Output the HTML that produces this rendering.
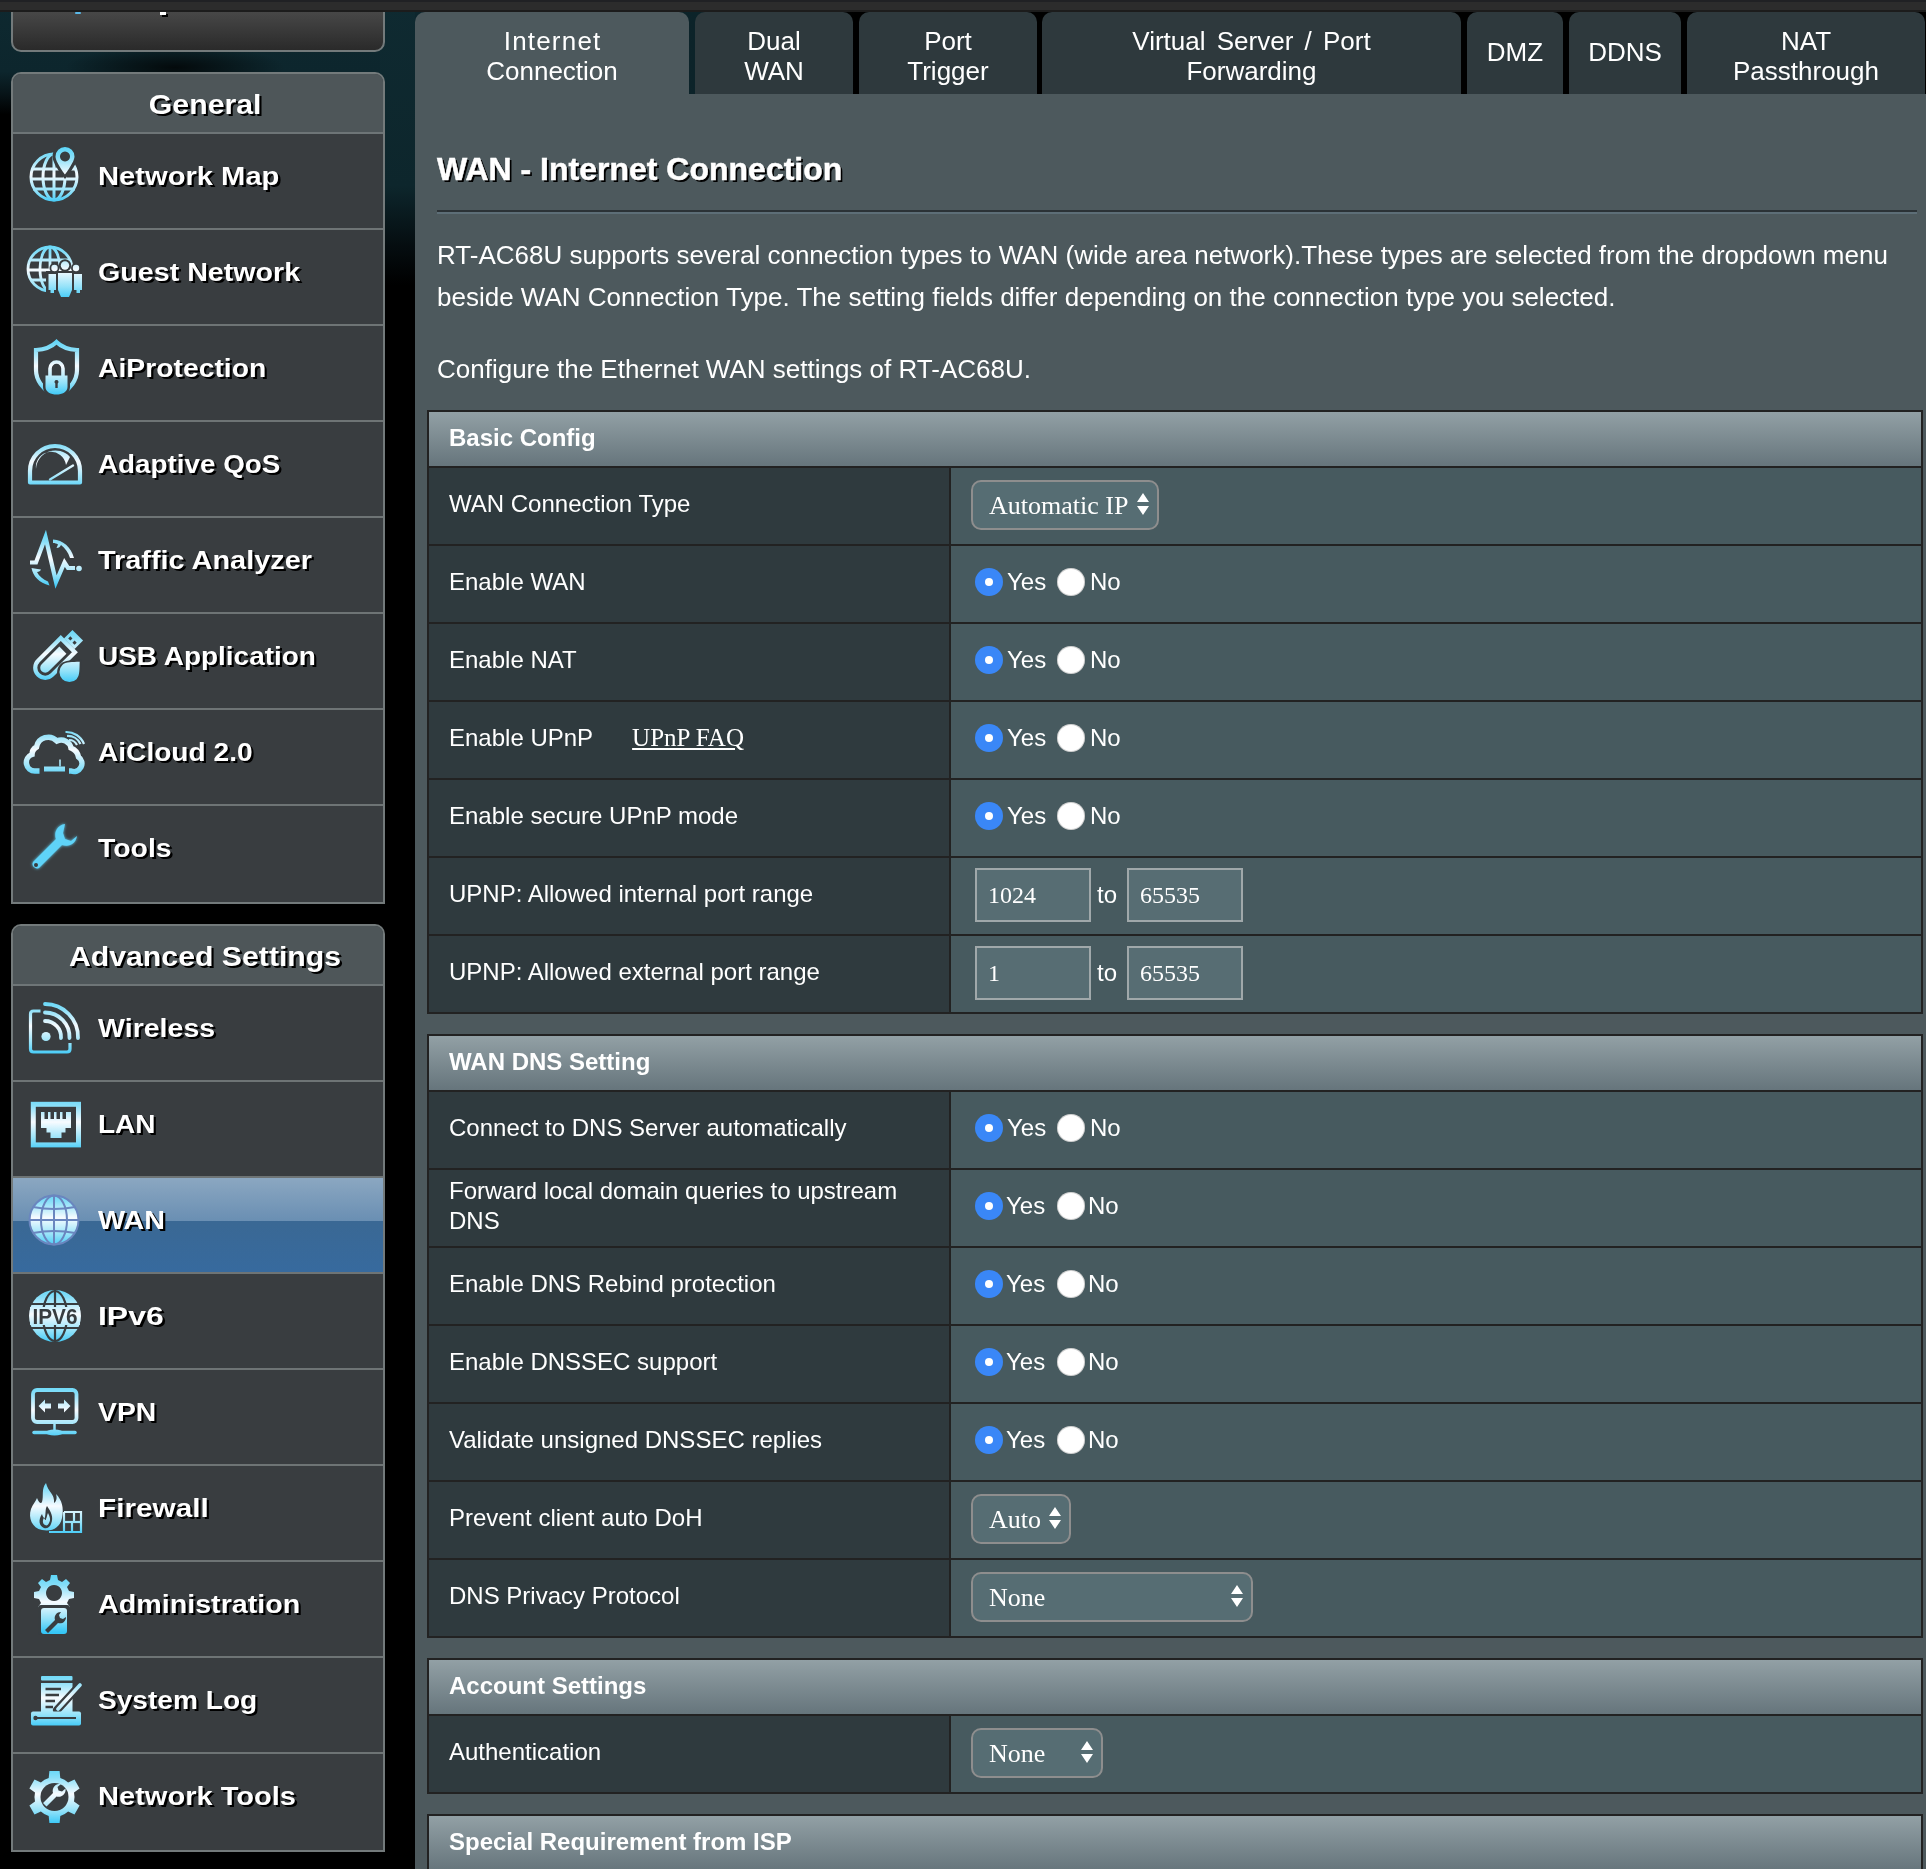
<!DOCTYPE html>
<html><head><meta charset="utf-8">
<style>
*{box-sizing:border-box}
html,body{margin:0;padding:0}
body{width:1926px;height:1869px;overflow:hidden;position:relative;font-family:"Liberation Sans",sans-serif;color:#fff;
background:#000;}
.bgA{position:absolute;left:0;top:0;width:415px;height:130px;background:linear-gradient(#0e2930 0%,#0d262d 55%,#071418 72%,#000 88%)}
.bgB{position:absolute;left:380px;top:0;width:35px;height:300px;background:linear-gradient(#0f2a31 0%,#0d262c 62%,#050d10 82%,#000 95%)}
.bgD{position:absolute;left:415px;top:0;width:440px;height:94px;background:linear-gradient(90deg,#0d262d 0%,#0c2329 65%,#000 100%)}
.bgC{position:absolute;left:60px;top:40px;width:230px;height:50px;background:radial-gradient(ellipse 110px 22px at 50% 55%,rgba(0,0,0,0.75),rgba(0,0,0,0))}
.topbar{position:absolute;z-index:5;left:0;top:0;width:1926px;height:12px;background:#2c2c2c;border-top:2px solid #202124;border-bottom:2px solid #1c1c1c}
.abs{position:absolute}
/* sidebar */
.topbox{position:absolute;left:11px;top:-40px;width:374px;height:92px;border:2px solid #737a7b;border-radius:0 0 10px 10px;
background:linear-gradient(#474747 57%,#2a2a2a 100%)}
.menu{position:absolute;left:11px;width:374px;border:2px solid #737a7b;border-radius:10px 10px 0 0;background:#393d40;overflow:hidden}
.menu .hd{height:60px;background:#4e5659;border-bottom:2px solid #6e7577;text-align:center;font-weight:bold;font-size:28px;line-height:62px;
text-shadow:2px 2px 0 #000;padding-left:14px}
.menu .hd .sx{display:inline-block}
.menu .it{position:relative;height:96px;border-bottom:2px solid #6e7475;background:#393d40}
.menu .it:last-child{border-bottom:none;height:96px}
.menu .it .tx{position:absolute;left:85px;top:27px;height:30px;line-height:30px;font-weight:bold;font-size:25px;text-shadow:2px 2px 0 #000;white-space:nowrap;transform-origin:0 0}
.menu .it svg.ic{position:absolute;left:11px;top:10px;width:60px;height:60px;overflow:visible}
.menu .it.act{background:linear-gradient(#8ba7c1 0%,#6a8fb3 45.5%,#3a6894 46%,#376a9e 100%)}
/* main */
.main{position:absolute;left:415px;top:94px;width:1511px;height:1775px;background:#4d595d}
.tab{position:absolute;top:12px;height:82px;background:#2e393d;border-radius:10px 10px 0 0;text-align:center;font-size:26px;line-height:30px;
padding-top:14px;white-space:nowrap}
.tab.act{background:#4d595d}
.tab.one{padding-top:25px}
.title{position:absolute;left:437px;top:151px;font-size:32px;font-weight:bold;text-shadow:2px 2px 0 #000;white-space:nowrap;-webkit-text-stroke:0.5px #fff}
.hr{position:absolute;left:437px;top:210px;width:1480px;height:4px;border-top:2px solid #2b3236;border-bottom:2px solid #5d6e77}
.desc{position:absolute;left:437px;font-size:26px;line-height:42px;white-space:nowrap}
/* tables */
.ft{position:absolute;left:427px;width:1496px;border:2px solid #222}
.ft .hd{height:56px;border-bottom:2px solid #222;background:linear-gradient(#92a0a5,#66757c);font-weight:bold;font-size:24px;line-height:54px;padding-left:20px}
.ft .hd span{position:relative;top:-1px}
.ft .r{display:flex;height:78px;border-bottom:2px solid #222}
.ft .r:last-child{border-bottom:none;height:76px}
.ft .th{width:522px;background:#2f3a3e;border-right:2px solid #222;font-size:24px;line-height:30px;padding-left:20px;display:flex;align-items:center;height:76px}
.ft .th span{position:relative;top:-2px}
.ft .td{flex:1;background:#475a5f;height:76px;position:relative}
.radio{position:absolute;top:22px;width:28px;height:28px;border-radius:50%}
.radio.on{background:#3a87f7}
.radio.on::after{content:"";position:absolute;left:10px;top:10px;width:8px;height:8px;border-radius:50%;background:#fff}
.radio.off{background:#fff;box-shadow:inset 0 0 0 1px rgba(0,0,0,0.18)}
.rl{position:absolute;top:21px;font-size:24px;line-height:30px}
.sel{position:absolute;top:12px;left:20px;height:50px;border:2px solid #8e8e8e;border-radius:10px;background:#566d73;font-family:"Liberation Serif",serif;font-size:26px;line-height:48px;padding-left:16px}
.sel .ar{position:absolute;right:8px;top:10px;width:12px;height:24px}
.inp{position:absolute;top:10px;height:54px;width:116px;border:2px solid #a0a8aa;background:#576d73;font-family:"Liberation Serif",serif;font-size:24px;line-height:50px;padding-left:11px}
.to{position:absolute;top:22px;font-size:24px;line-height:30px}
.faq{position:relative;top:-1px;margin-left:39px;font-family:"Liberation Serif",serif;font-size:25px;text-decoration:underline}
</style></head><body style="will-change:transform">
<div class="bgA"></div><div class="bgB"></div><div class="bgC"></div><div class="bgD"></div>
<div class="topbar"></div>

<!-- SIDEBAR -->
<svg width="0" height="0" style="position:absolute">
 <defs>
  <linearGradient id="ig" x1="0" y1="0" x2="0" y2="60" gradientUnits="userSpaceOnUse">
   <stop offset="0" stop-color="#4fd3f8"/><stop offset="0.22" stop-color="#86def8"/><stop offset="0.5" stop-color="#f7fbff"/><stop offset="0.78" stop-color="#94e2f9"/><stop offset="1" stop-color="#36c7f7"/>
  </linearGradient>
  <linearGradient id="ig2" x1="0" y1="0" x2="0" y2="60" gradientUnits="userSpaceOnUse">
   <stop offset="0" stop-color="#7fdcf8"/><stop offset="0.55" stop-color="#ffffff"/><stop offset="1" stop-color="#44c6f4"/>
  </linearGradient>
   <filter id="glow" x="-30%" y="-30%" width="160%" height="160%"><feGaussianBlur in="SourceGraphic" stdDeviation="1.6" result="b"/><feMerge><feMergeNode in="b"/><feMergeNode in="SourceGraphic"/></feMerge></filter>
  <linearGradient id="igr1" x1="25.5" y1="-25.5" x2="-17" y2="17" gradientUnits="userSpaceOnUse"><stop offset="0" stop-color="#4fd3f8"/><stop offset="0.22" stop-color="#86def8"/><stop offset="0.5" stop-color="#f7fbff"/><stop offset="0.78" stop-color="#94e2f9"/><stop offset="1" stop-color="#36c7f7"/></linearGradient>
  <linearGradient id="igr2" x1="-33.2" y1="-33.2" x2="9.2" y2="9.2" gradientUnits="userSpaceOnUse"><stop offset="0" stop-color="#4fd3f8"/><stop offset="0.22" stop-color="#86def8"/><stop offset="0.5" stop-color="#f7fbff"/><stop offset="0.78" stop-color="#94e2f9"/><stop offset="1" stop-color="#36c7f7"/></linearGradient>
 </defs>
</svg>
<div class="topbox"><div style="position:absolute;left:147px;top:50px;width:6px;height:3px;background:#fff;box-shadow:2px 2px 0 #000"></div><div style="position:absolute;left:62px;top:50px;width:6px;height:2px;border-radius:2px;background:#5ab8e8"></div></div>

<div class="menu" style="top:72px;height:832px">
 <div class="hd"><span class="sx" style="transform:scaleX(1.08)">General</span></div>
 <div class="it"><svg class="ic" viewBox="0 0 60 60"><g fill="none" stroke="url(#ig)" stroke-width="3">
<circle cx="30" cy="33" r="23"/>
<ellipse cx="30" cy="33" rx="11" ry="23"/>
<line x1="30" y1="10" x2="30" y2="56"/>
<line x1="8" y1="25" x2="52" y2="25"/><line x1="7" y1="35" x2="53" y2="35"/><line x1="9" y1="45" x2="51" y2="45"/>
</g>
<path d="M41 2.5a10 10 0 0 1 10 10c0 6-10 18.5-10 18.5s-10-12.5-10-18.5a10 10 0 0 1 10-10z" fill="#383d40" stroke="#383d40" stroke-width="5"/>
<path d="M41 3a9.5 9.5 0 0 1 9.5 9.5c0 5.5-9.5 18-9.5 18s-9.5-12.5-9.5-18A9.5 9.5 0 0 1 41 3z M41 7.5a5 5 0 1 0 0.01 0z" fill="url(#ig)" fill-rule="evenodd"/></svg><div class="tx" style="transform:scaleX(1.166)">Network Map</div></div>
 <div class="it"><svg class="ic" viewBox="0 0 60 60"><g fill="none" stroke="url(#ig)" stroke-width="2.8">
<circle cx="26" cy="29" r="22"/>
<ellipse cx="26" cy="29" rx="10" ry="22"/>
<line x1="26" y1="7" x2="26" y2="51"/>
<line x1="6" y1="20" x2="46" y2="20"/><line x1="4" y1="30" x2="48" y2="30"/><line x1="7" y1="40" x2="45" y2="40"/>
</g>
<g fill="#393d40">
<circle cx="30.5" cy="28" r="5"/><circle cx="52" cy="28" r="5"/><circle cx="41" cy="25.5" r="6.2"/>
<path d="M22 31H60V54H22Z"/><path d="M32 31H50V52L47 59H35L32 52Z"/>
</g>
<g fill="url(#ig)">
<circle cx="30.5" cy="28" r="3.2"/><circle cx="52" cy="28" r="3.2"/><circle cx="41" cy="25.5" r="4.2"/>
<path d="M24.5 34h7.5v16h-2v3h-3.5v-3h-2z"/><path d="M50 34h8v16h-2v3h-3.5v-3h-2.5z"/>
<path d="M34 33h14v17l-3 7h-8l-3-7z"/>
</g></svg><div class="tx" style="transform:scaleX(1.146)">Guest Network</div></div>
 <div class="it"><svg class="ic" viewBox="0 0 60 60"><path d="M25 56C20 53 12 45 12 34V14C20.5 13.5 27.5 11 32.5 6C37.5 11 44.5 13.5 53 14V34C53 45 45 53 40 56" fill="none" stroke="url(#ig)" stroke-width="4.2"/>
<path d="M19 37.5H46V51C46 57.5 39 61 32.5 61S19 57.5 19 51Z" fill="#393d40"/><path d="M26 40V32.5a6.5 6.5 0 0 1 13 0V40" fill="none" stroke="url(#ig)" stroke-width="3.6"/>
<path d="M21.5 39.5H43.5V51C43.5 56 38 58.5 32.5 58.5S21.5 56 21.5 51Z M32.5 44a2 2 0 0 0-1.2 3.6V52h2.4v-4.4A2 2 0 0 0 32.5 44z" fill="url(#ig)" fill-rule="evenodd"/></svg><div class="tx" style="transform:scaleX(1.132)">AiProtection</div></div>
 <div class="it"><svg class="ic" viewBox="0 0 60 60"><path d="M6 50.5V39A25 25 0 0 1 56 39V50.5Z" fill="none" stroke="url(#ig)" stroke-width="4.2" stroke-linejoin="round"/>
<path d="M12 37A19.5 19.5 0 0 1 46 25L42 33A14 14 0 0 0 12 37Z" fill="url(#ig)"/>
<path d="M26 47.5L49 33.5" stroke="url(#ig)" stroke-width="2.4" stroke-linecap="round"/></svg><div class="tx" style="transform:scaleX(1.112)">Adaptive QoS</div></div>
 <div class="it"><svg class="ic" viewBox="0 0 60 60"><g fill="none" stroke="url(#ig)" stroke-width="4.2" stroke-linejoin="miter" stroke-linecap="butt">
<path d="M6 34.5H12L21.5 9L32 54L40.5 34.5L44 40H51"/>
</g>
<circle cx="55" cy="40.5" r="2.8" fill="url(#ig)"/>
<path d="M29 11.5C39 12 47 19 50 30L46 30C44 24 41 20 37 17C36 19 35 20 32.5 20L34 16.5C32.5 15.5 31 15 29 15Z" fill="url(#ig)"/>
<path d="M7.5 40C9 48 15 55 25.5 57.5L24 53.5C19 51.5 15 48 13 44C15 44 16.5 43 17 41.5L13.5 41Z" fill="url(#ig)"/></svg><div class="tx" style="transform:scaleX(1.155)">Traffic Analyzer</div></div>
 <div class="it"><svg class="ic" viewBox="0 0 60 60"><g transform="translate(29 36) rotate(-45)">
<path d="M21 -10H-11A10 10 0 0 0 -11 10H21Z" fill="none" stroke="url(#igr1)" stroke-width="4.2"/>
<path d="M14 -5H-11A5 5 0 0 0 -11 5H14Z" fill="url(#igr1)"/>
<rect x="23" y="-7.5" width="12" height="15" fill="url(#igr1)"/>
<rect x="26" y="-4.5" width="3" height="3" fill="#383d40"/><rect x="26" y="1.5" width="3" height="3" fill="#383d40"/>
</g>
<g transform="translate(46.5 47) rotate(45)">
<path d="M0 -16C6 -9 12 -4 12 2A12 12 0 0 1 -12 2C-12 -4 -6 -9 0 -16Z" fill="#383d40"/>
<path d="M0 -13C5 -7.5 10 -3.5 10 1.5A10 10 0 0 1 -10 1.5C-10 -3.5 -5 -7.5 0 -13Z" fill="url(#igr2)"/>
</g></svg><div class="tx" style="transform:scaleX(1.118)">USB Application</div></div>
 <div class="it"><svg class="ic" viewBox="0 0 60 60"><path d="M15.5 51H11A8.5 8.5 0 0 1 8 34.5A9 9 0 0 1 12.5 27A12 12 0 0 1 33 21A10 10 0 0 1 47 28A12 12 0 0 1 54.5 37A8 8 0 0 1 47 51H45" fill="none" stroke="url(#ig)" stroke-width="5.5"/>
<rect x="20" y="46.5" width="21" height="5" fill="url(#ig)"/><path d="M36 39.5V46.5" stroke="url(#ig)" stroke-width="1.6"/>
<g fill="none" stroke="url(#ig)" stroke-width="2.2"><path d="M45 20A9 9 0 0 1 53 25"/><path d="M43 16A14 14 0 0 1 56.5 24"/><path d="M41.5 12A19 19 0 0 1 60 24"/></g></svg><div class="tx" style="transform:scaleX(1.124)">AiCloud 2.0</div></div>
 <div class="it"><svg class="ic" viewBox="0 0 60 60"><g filter="url(#glow)"><path d="M41 8a11 11 0 0 0-9 15L9 46a4.5 4.5 0 0 0 6 6l23-23a11 11 0 0 0 15-9l-6 5-6-2-2-6z" fill="#5fd3f8"/>
<circle cx="12" cy="49" r="2" fill="#383d40"/></g></svg><div class="tx" style="transform:scaleX(1.136)">Tools</div></div>
</div>

<div class="menu" style="top:924px;height:928px">
 <div class="hd"><span class="sx" style="transform:scaleX(1.08)">Advanced Settings</span></div>
 <div class="it"><svg class="ic" viewBox="0 0 60 60"><path d="M16.5 15H9.5Q6.5 15 6.5 18V53Q6.5 56 9.5 56H43Q46 56 46 53V47" fill="none" stroke="url(#ig)" stroke-width="3.2"/>
<g fill="none" stroke="url(#ig)" stroke-width="3.8" stroke-linecap="round"><path d="M21 25A16 16 0 0 1 37 42"/><path d="M21 16.5A24.5 24.5 0 0 1 45.5 42"/><path d="M21 8A33 33 0 0 1 54 42"/></g>
<circle cx="22" cy="40.5" r="4.6" fill="url(#ig)"/></svg><div class="tx" style="transform:scaleX(1.142)">Wireless</div></div>
 <div class="it"><svg class="ic" viewBox="0 0 60 60"><rect x="9.3" y="12.3" width="45.2" height="40.6" fill="none" stroke="url(#ig)" stroke-width="5"/>
<path d="M17 20H47V36H41.5V40.5H37.5V46H26.5V40.5H22.5V36H17Z" fill="url(#ig)"/>
<g fill="#383d40"><rect x="20.5" y="20" width="3.5" height="7"/><rect x="26.5" y="20" width="3.5" height="7"/><rect x="32.5" y="20" width="3.5" height="7"/><rect x="38.5" y="20" width="3.5" height="7"/></g></svg><div class="tx" style="transform:scaleX(1.120)">LAN</div></div>
 <div class="it act"><svg class="ic" viewBox="0 0 60 60"><circle cx="30" cy="32" r="24.5" fill="url(#ig)"/>
<g fill="none" stroke="#6a86bf" stroke-width="2">
<circle cx="30" cy="32" r="24.5"/><ellipse cx="30" cy="32" rx="13" ry="24.5"/>
<line x1="30" y1="7.5" x2="30" y2="56.5"/>
<path d="M9 19Q30 23 51 19"/><line x1="5.5" y1="32" x2="54.5" y2="32"/><path d="M9 45Q30 41 51 45"/>
</g></svg><div class="tx" style="transform:scaleX(1.147)">WAN</div></div>
 <div class="it"><svg class="ic" viewBox="0 0 60 60"><circle cx="31" cy="32" r="26" fill="url(#ig)"/>
<g fill="none" stroke="#383d40" stroke-width="2.2">
<ellipse cx="31" cy="32" rx="12" ry="25"/><line x1="31" y1="6" x2="31" y2="58"/>
<line x1="7" y1="20" x2="55" y2="20"/><line x1="7" y1="44" x2="55" y2="44"/>
</g>
<rect x="6" y="23" width="50" height="18" fill="url(#ig)"/>
<text x="8.5" y="40" font-family="Liberation Sans" font-weight="bold" font-size="22" fill="#383d40" textLength="45" lengthAdjust="spacingAndGlyphs">IPV6</text></svg><div class="tx" style="transform:scaleX(1.277)">IPv6</div></div>
 <div class="it"><svg class="ic" viewBox="0 0 60 60"><rect x="9" y="10" width="43.5" height="32" rx="4" fill="none" stroke="url(#ig)" stroke-width="3.8"/>
<path d="M30.5 43V50" stroke="url(#ig)" stroke-width="2.5"/>
<path d="M10 52.5H51" stroke="url(#ig)" stroke-width="3.5" stroke-linecap="round"/>
<ellipse cx="30.5" cy="52.5" rx="9" ry="3" fill="url(#ig)"/>
<path d="M14.5 26L21 19.5V23.5H27V28.5H21V32.5Z M46.5 26L40 19.5V23.5H34V28.5H40V32.5Z" fill="url(#ig)"/></svg><div class="tx" style="transform:scaleX(1.132)">VPN</div></div>
 <div class="it"><svg class="ic" viewBox="0 0 60 60"><path d="M22 7C24 16 31 18 30 27C33 25 33 21 32 18C38 24 40 32 38 42C36 52 28 56 18 54C8 52 4 42 7 33C9 28 12 25 13 22C15 27 17 28 18 26C20 20 17 13 22 7Z" fill="url(#ig)"/>
<path d="M20 52C15 50 14 44 18 38C19 42 21 43 21 41C22 37 21 33 23 30C27 36 30 41 27 48C26 51 23 53 20 52Z" fill="#383d40"/>
<path d="M21 49C19 48 18 45 20 42C21 44 22 45 22 43C23 41 23 39 24 37C26 41 27 44 25 47C24 49 23 50 21 49Z" fill="url(#ig)"/>
<g fill="none" stroke="url(#ig)" stroke-width="2.2"><path d="M25 56H57V36H40"/><path d="M40 46H57"/><path d="M40 36V56"/><path d="M48 46V56"/><path d="M50 36V46"/></g></svg><div class="tx" style="transform:scaleX(1.189)">Firewall</div></div>
 <div class="it"><svg class="ic" viewBox="0 0 60 60"><g fill="url(#ig)">
<path d="M27 3h6l1 5 4 2 4-3 4 4-3 4 2 4 5 1v6l-5 1-2 4 3 4-4 4-4-3-4 2-1 5h-6l-1-5-4-2-4 3-4-4 3-4-2-4-5-1v-6l5-1 2-4-3-4 4-4 4 3 4-2z M30 13a8 8 0 1 0 0.01 0z" fill-rule="evenodd"/>
</g>
<rect x="14" y="33" width="32" height="30" rx="3" fill="#383d40"/>
<rect x="17" y="36" width="26" height="26" rx="3" fill="url(#ig)"/>
<path d="M37 40a6 6 0 0 0-6 8l-10 10 3 3 10-10a6 6 0 0 0 8-6l-3 2-3-1-1-3z" fill="#383d40"/></svg><div class="tx" style="transform:scaleX(1.147)">Administration</div></div>
 <div class="it"><svg class="ic" viewBox="0 0 60 60"><rect x="17" y="8" width="31.5" height="4.5" rx="1" fill="url(#ig)"/>
<rect x="17" y="15" width="31.5" height="29" fill="url(#ig)"/>
<path d="M21.5 21H37M21.5 27H35M21.5 33H31M21.5 39H29" stroke="#393d40" stroke-width="2.4"/>
<path d="M33 42L56 17" stroke="#393d40" stroke-width="8" stroke-linecap="round"/>
<path d="M34 41L56 17" stroke="url(#ig)" stroke-width="3.6" stroke-linecap="round"/>
<rect x="7" y="43.5" width="50" height="14" rx="2" fill="url(#ig)"/>
<path d="M13 50H52" stroke="#393d40" stroke-width="2.2"/><circle cx="11.5" cy="50" r="2.2" fill="#393d40"/></svg><div class="tx" style="transform:scaleX(1.124)">System Log</div></div>
 <div class="it"><svg class="ic" viewBox="0 0 60 60"><path d="M24.7 13.9L25.4 7.0L35.6 7.0L36.3 13.9A20 20 0 0 1 44.1 18.4L50.5 15.6L55.6 24.4L50.0 28.5A20 20 0 0 1 50.0 37.5L55.6 41.6L50.5 50.4L44.1 47.6A20 20 0 0 1 36.3 52.1L35.6 59.0L25.4 59.0L24.7 52.1A20 20 0 0 1 16.9 47.6L10.5 50.4L5.4 41.6L11.0 37.5A20 20 0 0 1 11.0 28.5L5.4 24.4L10.5 15.6L16.9 18.4A20 20 0 0 1 24.7 13.9Z" fill="url(#ig)"/>
<circle cx="30.5" cy="33" r="14" fill="#393d40"/>
<path d="M37 20a7 7 0 0 0-8 9l-10 10 3.5 3.5 10-10a7 7 0 0 0 9-8l-3.5 3-3.5-1-1-3.5z" fill="url(#ig)"/></svg><div class="tx" style="transform:scaleX(1.162)">Network Tools</div></div>
</div>

<!-- MAIN -->
<div class="main"></div>
<div class="tab act" style="left:415px;width:274px"><span style="letter-spacing:1.2px;margin-right:-1.2px">Internet</span><br>Connection</div>
<div class="tab" style="left:695px;width:158px">Dual<br>WAN</div>
<div class="tab" style="left:859px;width:178px">Port<br>Trigger</div>
<div class="tab" style="left:1042px;width:419px"><span style="word-spacing:4px">Virtual Server / Port</span><br>Forwarding</div>
<div class="tab one" style="left:1467px;width:96px">DMZ</div>
<div class="tab one" style="left:1569px;width:112px">DDNS</div>
<div class="tab" style="left:1687px;width:238px">NAT<br>Passthrough</div>

<div class="title">WAN - Internet Connection</div>
<div class="hr"></div>
<div class="desc" style="top:234px">RT-AC68U supports several connection types to WAN (wide area network).These types are selected from the dropdown menu<br>beside WAN Connection Type. The setting fields differ depending on the connection type you selected.</div>
<div class="desc" style="top:348px">Configure the Ethernet WAN settings of RT-AC68U.</div>

<!-- TABLE 1 -->
<div class="ft" style="top:410px">
 <div class="hd"><span>Basic Config</span></div>
 <div class="r"><div class="th"><span>WAN Connection Type</span></div><div class="td"><div class="sel" style="width:188px">Automatic IP<svg class="ar" viewBox="0 0 12 24"><path d="M6 1L12 10H0Z M0 14H12L6 23Z" fill="#fff"/></svg></div></div></div>
 <div class="r"><div class="th"><span>Enable WAN</span></div><div class="td"><div class="radio on" style="left:24px"></div><div class="rl" style="left:56px">Yes</div><div class="radio off" style="left:106px"></div><div class="rl" style="left:139px">No</div></div></div>
 <div class="r"><div class="th"><span>Enable NAT</span></div><div class="td"><div class="radio on" style="left:24px"></div><div class="rl" style="left:56px">Yes</div><div class="radio off" style="left:106px"></div><div class="rl" style="left:139px">No</div></div></div>
 <div class="r"><div class="th"><span>Enable UPnP</span><span class="faq">UPnP FAQ</span></div><div class="td"><div class="radio on" style="left:24px"></div><div class="rl" style="left:56px">Yes</div><div class="radio off" style="left:106px"></div><div class="rl" style="left:139px">No</div></div></div>
 <div class="r"><div class="th"><span>Enable secure UPnP mode</span></div><div class="td"><div class="radio on" style="left:24px"></div><div class="rl" style="left:56px">Yes</div><div class="radio off" style="left:106px"></div><div class="rl" style="left:139px">No</div></div></div>
 <div class="r"><div class="th"><span>UPNP: Allowed internal port range</span></div><div class="td"><div class="inp" style="left:24px">1024</div><div class="to" style="left:146px">to</div><div class="inp" style="left:176px">65535</div></div></div>
 <div class="r"><div class="th"><span>UPNP: Allowed external port range</span></div><div class="td"><div class="inp" style="left:24px">1</div><div class="to" style="left:146px">to</div><div class="inp" style="left:176px">65535</div></div></div>
</div>

<!-- TABLE 2 -->
<div class="ft" style="top:1034px">
 <div class="hd"><span>WAN DNS Setting</span></div>
 <div class="r"><div class="th"><span>Connect to DNS Server automatically</span></div><div class="td"><div class="radio on" style="left:24px"></div><div class="rl" style="left:56px">Yes</div><div class="radio off" style="left:106px"></div><div class="rl" style="left:139px">No</div></div></div>
 <div class="r"><div class="th"><span>Forward local domain queries to upstream<br>DNS</span></div><div class="td"><div class="radio on" style="left:24px"></div><div class="rl" style="left:55px">Yes</div><div class="radio off" style="left:106px"></div><div class="rl" style="left:137px">No</div></div></div>
 <div class="r"><div class="th"><span>Enable DNS Rebind protection</span></div><div class="td"><div class="radio on" style="left:24px"></div><div class="rl" style="left:55px">Yes</div><div class="radio off" style="left:106px"></div><div class="rl" style="left:137px">No</div></div></div>
 <div class="r"><div class="th"><span>Enable DNSSEC support</span></div><div class="td"><div class="radio on" style="left:24px"></div><div class="rl" style="left:55px">Yes</div><div class="radio off" style="left:106px"></div><div class="rl" style="left:137px">No</div></div></div>
 <div class="r"><div class="th"><span>Validate unsigned DNSSEC replies</span></div><div class="td"><div class="radio on" style="left:24px"></div><div class="rl" style="left:55px">Yes</div><div class="radio off" style="left:106px"></div><div class="rl" style="left:137px">No</div></div></div>
 <div class="r"><div class="th"><span>Prevent client auto DoH</span></div><div class="td"><div class="sel" style="width:100px">Auto<svg class="ar" viewBox="0 0 12 24"><path d="M6 1L12 10H0Z M0 14H12L6 23Z" fill="#fff"/></svg></div></div></div>
 <div class="r"><div class="th"><span>DNS Privacy Protocol</span></div><div class="td"><div class="sel" style="width:282px">None<svg class="ar" viewBox="0 0 12 24"><path d="M6 1L12 10H0Z M0 14H12L6 23Z" fill="#fff"/></svg></div></div></div>
</div>

<!-- TABLE 3 -->
<div class="ft" style="top:1658px">
 <div class="hd"><span>Account Settings</span></div>
 <div class="r"><div class="th"><span>Authentication</span></div><div class="td"><div class="sel" style="width:132px">None<svg class="ar" viewBox="0 0 12 24"><path d="M6 1L12 10H0Z M0 14H12L6 23Z" fill="#fff"/></svg></div></div></div>
</div>

<!-- TABLE 4 -->
<div class="ft" style="top:1814px;height:80px">
 <div class="hd"><span>Special Requirement from ISP</span></div>
</div>

</body></html>
